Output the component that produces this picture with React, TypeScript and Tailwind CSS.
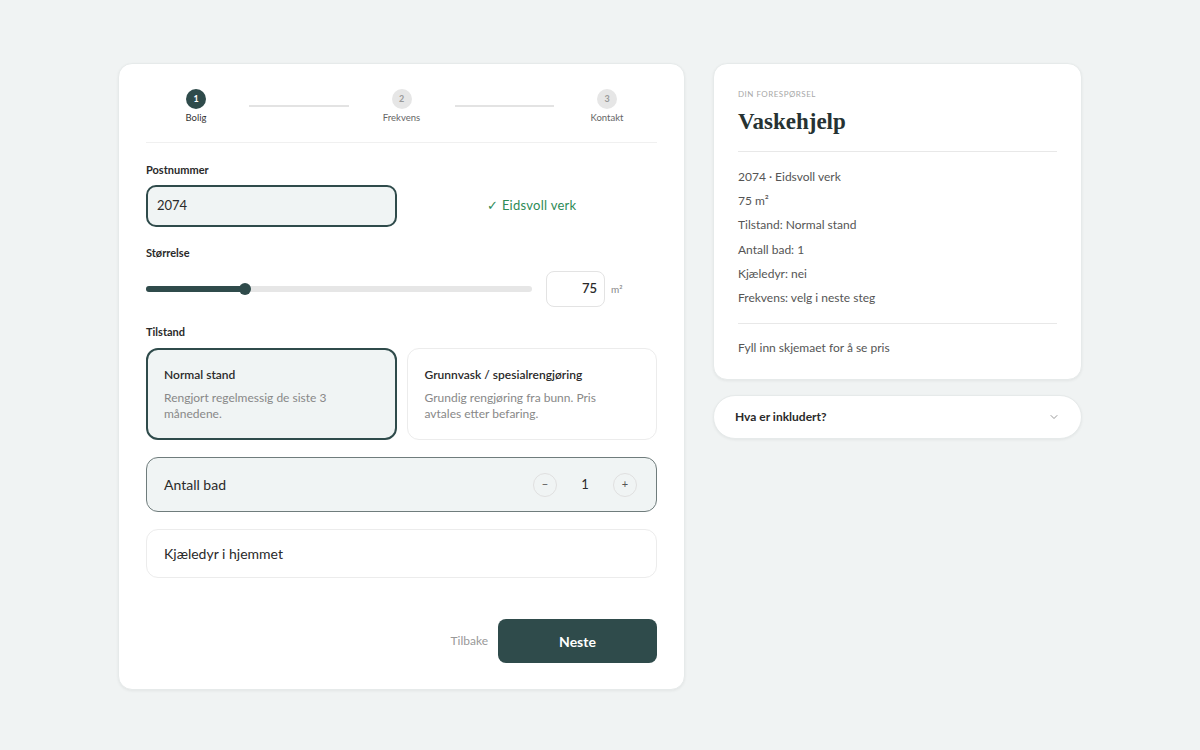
import { ChevronDown } from "lucide-react";

const font = { fontFamily: "Lato, 'Noto Sans', sans-serif" };

const summary = [
  "2074 · Eidsvoll verk",
  "75 m²",
  "Tilstand: Normal stand",
  "Antall bad: 1",
  "Kjæledyr: nei",
  "Frekvens: velg i neste steg",
];

function Step({ n, label, active }: { n: number; label: string; active?: boolean }) {
  return (
    <div className="w-[100px] flex flex-col items-center">
      <div
        className={
          active
            ? "w-5 h-5 rounded-full bg-[#2f4b4b] text-white text-[9px] font-bold flex items-center justify-center"
            : "w-5 h-5 rounded-full bg-[#e6e6e6] text-[#9a9a9a] text-[9px] font-bold flex items-center justify-center"
        }
      >
        {n}
      </div>
      <div className={active ? "mt-[3px] text-[9.5px] leading-3 text-[#333]" : "mt-[3px] text-[9.5px] leading-3 text-[#666]"}>
        {label}
      </div>
    </div>
  );
}

export default function App() {
  return (
    <div className="min-h-screen bg-[#f0f3f3] pt-[63px] pb-15" style={font}>
      <div className="flex items-start justify-center gap-[28px]">
        {/* Form card */}
        <div className="w-[567px] bg-white rounded-[14px] border border-[#e6eaea] shadow-[0_1px_3px_rgba(0,0,0,0.06)] px-[27px] pt-[25px] pb-[26px]">
          <div className="flex items-start gap-[3px]">
            <Step n={1} label="Bolig" active />
            <div className="flex-1 h-[1.5px] bg-[#e3e3e3] mt-[16px]" />
            <Step n={2} label="Frekvens" />
            <div className="flex-1 h-[1.5px] bg-[#e3e3e3] mt-[16px]" />
            <Step n={3} label="Kontakt" />
          </div>
          <div className="h-px bg-[#f0f0f0] mt-[18px]" />

          <div className="mt-[20px] text-[11px] leading-[14px] font-bold text-[#2a2a2a]">Postnummer</div>
          <div className="grid grid-cols-2 gap-[10px] mt-[8px]">
            <div className="h-[42px] rounded-[10px] border-2 border-[#2f4b4b] bg-[#f0f4f4] flex items-center px-[9px] text-[13px] text-[#2a2a2a]">
              2074
            </div>
            <div className="flex items-center justify-center text-[13px] tracking-[0.02em] text-[#2e8b57]">✓ Eidsvoll verk</div>
          </div>

          <div className="mt-[19px] text-[11px] leading-[14px] font-bold text-[#2a2a2a]">Størrelse</div>
          <div className="flex items-center mt-[11px]">
            <div className="relative w-[386px] h-[6px] rounded-full bg-[#e6e6e6]">
              <div className="absolute left-0 top-0 h-[6px] w-[99px] rounded-full bg-[#2f4b4b]" />
              <div className="absolute left-[93px] top-[-3px] w-3 h-3 rounded-full bg-[#2f4b4b]" />
            </div>
            <div className="ml-[14px] w-[59px] h-[36px] rounded-[8px] border border-[#e3e3e3] flex items-center justify-end pr-[7px] text-[13px] font-semibold text-[#2a2a2a]">
              75
            </div>
            <div className="ml-[6px] text-[10px] text-[#888]">m²</div>
          </div>

          <div className="mt-[18px] text-[11px] leading-[14px] font-bold text-[#2a2a2a]">Tilstand</div>
          <div className="grid grid-cols-2 gap-[10px] mt-[9px]">
            <div className="h-[92px] rounded-[12px] border-2 border-[#2f4b4b] bg-[#f0f4f4] pl-[16px] pr-[24px] pt-[17px]">
              <div className="text-[12px] leading-[16px] font-semibold text-[#2a2a2a]">Normal stand</div>
              <div className="mt-[7px] text-[12px] leading-[16px] text-[#888]">
                Rengjort regelmessig de siste 3 månedene.
              </div>
            </div>
            <div className="h-[92px] rounded-[12px] border border-[#ececec] bg-white pl-[17px] pr-[24px] pt-[18px]">
              <div className="text-[12px] leading-[16px] font-semibold text-[#2a2a2a]">Grunnvask / spesialrengjøring</div>
              <div className="mt-[7px] text-[12px] leading-[16px] text-[#888]">
                Grundig rengjøring fra bunn. Pris avtales etter befaring.
              </div>
            </div>
          </div>

          <div className="mt-[17px] h-[55px] rounded-[12px] border border-[#6f7c7c] bg-[#f0f4f4] flex items-center px-[17px]">
            <div className="flex-1 text-[14px] text-[#2a2a2a]">Antall bad</div>
            <div className="w-6 h-6 rounded-full border border-[#e0e0e0] flex items-center justify-center text-[11px] text-[#555]">−</div>
            <div className="w-[56px] text-center text-[13px] text-[#2a2a2a]">1</div>
            <div className="w-6 h-6 rounded-full border border-[#e0e0e0] flex items-center justify-center text-[11px] text-[#555] mr-[2px]">+</div>
          </div>

          <div className="mt-[17px] h-[49px] rounded-[12px] border border-[#ececec] flex items-center px-[17px] text-[14px] text-[#2a2a2a]">
            Kjæledyr i hjemmet
          </div>

          <div className="mt-[41px] flex items-center justify-end">
            <div className="text-[12px] text-[#999] mr-[10px]">Tilbake</div>
            <div className="w-[159px] h-[44px] rounded-[8px] bg-[#2f4b4b] text-white text-[14px] font-bold flex items-center justify-center">
              Neste
            </div>
          </div>
        </div>

        {/* Summary column */}
        <div className="w-[369px] flex flex-col gap-[15px]">
          <div className="bg-white rounded-[14px] border border-[#e6eaea] shadow-[0_1px_3px_rgba(0,0,0,0.06)] px-[24px] pt-[25px] pb-[23px]">
            <div className="text-[8px] leading-[10px] tracking-[0.06em] text-[#a8a8a8]">DIN FORESPØRSEL</div>
            <div
              className="mt-[9px] text-[23px] leading-[28px] font-bold text-[#263232]"
              style={{ fontFamily: "'Liberation Serif', 'DejaVu Serif', serif" }}
            >
              Vaskehjelp
            </div>
            <div className="h-px bg-[#e8e8e8] mt-[15px]" />
            <div className="mt-[17px] flex flex-col gap-[8.2px]">
              {summary.map((s) => (
                <div key={s} className="text-[12px] leading-[16px] text-[#555]">
                  {s}
                </div>
              ))}
            </div>
            <div className="h-px bg-[#e8e8e8] mt-[17px]" />
            <div className="mt-[16px] text-[12px] leading-[16px] text-[#555]">Fyll inn skjemaet for å se pris</div>
          </div>

          <div className="h-[44px] bg-white rounded-full border border-[#e6eaea] shadow-[0_1px_3px_rgba(0,0,0,0.06)] flex items-center px-[21px]">
            <div className="flex-1 text-[12px] font-bold text-[#2a2a2a]">Hva er inkludert?</div>
            <ChevronDown size={12} strokeWidth={1.5} className="text-[#777]" />
          </div>
        </div>
      </div>
    </div>
  );
}
